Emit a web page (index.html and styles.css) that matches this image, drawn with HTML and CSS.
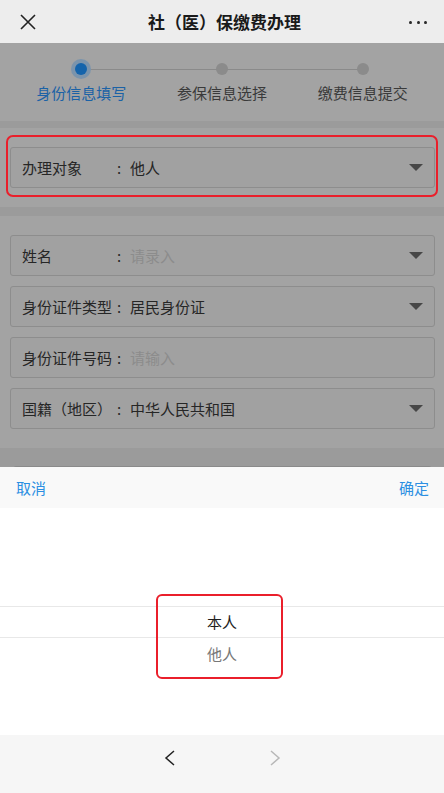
FILE: index.html
```html
<!DOCTYPE html>
<html lang="zh-CN">
<head>
<meta charset="utf-8">
<title>社（医）保缴费办理</title>
<link rel="stylesheet" href="styles.css">
</head>
<body>
<div class="app">
  <header class="nav">
    <svg class="nav-close" width="16" height="16" viewBox="0 0 16 16"><path d="M1 1 L15 15 M15 1 L1 15" stroke="#222" stroke-width="1.6" fill="none"/></svg>
    <h1 class="nav-title">社（医）保缴费办理</h1>
    <div class="nav-more"><i></i><i></i><i></i></div>
  </header>

  <main class="content">
    <div class="steps">
      <div class="step step-active"><span class="step-dot"></span><span class="step-label">身份信息填写</span></div>
      <div class="step"><span class="step-dot"></span><span class="step-label">参保信息选择</span></div>
      <div class="step"><span class="step-dot"></span><span class="step-label">缴费信息提交</span></div>
    </div>

    <div class="divider"></div>

    <section class="card card-target">
      <div class="field">
        <span class="field-label">办理对象</span><span class="field-colon">:</span><span class="field-value">他人</span><span class="field-arrow"></span>
      </div>
      <div class="mark mark-target"></div>
    </section>

    <div class="divider divider-wide"></div>

    <section class="card card-list">
      <div class="field">
        <span class="field-label">姓名</span><span class="field-colon">:</span><span class="field-value placeholder">请录入</span><span class="field-arrow"></span>
      </div>
      <div class="field">
        <span class="field-label">身份证件类型</span><span class="field-colon">:</span><span class="field-value">居民身份证</span><span class="field-arrow"></span>
      </div>
      <div class="field">
        <span class="field-label">身份证件号码</span><span class="field-colon">:</span><span class="field-value placeholder">请输入</span>
      </div>
      <div class="field">
        <span class="field-label">国籍（地区）</span><span class="field-colon">:</span><span class="field-value">中华人民共和国</span><span class="field-arrow"></span>
      </div>
    </section>

    <div class="tail">
      <div class="field field-hidden"></div>
    </div>
  </main>

  <div class="sheet">
    <div class="sheet-bar">
      <span class="sheet-btn">取消</span>
      <span class="sheet-btn">确定</span>
    </div>
    <div class="picker">
      <div class="picker-item picker-selected">本人</div>
      <div class="picker-item">他人</div>
      <div class="mark mark-picker"></div>
    </div>
    <div class="sheet-foot">
      <svg width="12" height="16" viewBox="0 0 12 16"><path d="M10 1 L2 8 L10 15" stroke="#222" stroke-width="1.5" fill="none"/></svg>
      <svg width="12" height="16" viewBox="0 0 12 16"><path d="M2 1 L10 8 L2 15" stroke="#b8b8b8" stroke-width="1.5" fill="none"/></svg>
    </div>
  </div>
</div>
</body>
</html>
```

FILE: styles.css
```css
* { box-sizing: border-box; margin: 0; padding: 0; }
html, body { width: 444px; height: 793px; overflow: hidden; }
body {
  font-family: "Noto Sans CJK SC", "Noto Sans", sans-serif;
  font-size: 15px;
  color: #2a2a2a;
  background: #a3a3a3;
}
.app { width: 444px; height: 793px; position: relative; overflow: hidden; }

/* nav */
.nav {
  height: 43px;
  background: #ededed;
  display: flex;
  align-items: center;
  padding: 0 17px 0 20px;
}
.nav-close { flex: 0 0 16px; }
.nav-title {
  flex: 1;
  text-align: center;
  font-size: 17px;
  font-weight: 700;
  color: #1a1a1a;
  line-height: 43px;
  padding-left: 4px;
}
.nav-more { display: flex; gap: 4.5px; width: 18px; padding-top: 2px; }
.nav-more i { width: 3.5px; height: 3.5px; border-radius: 50%; background: #2a2a2a; display: block; }

/* content (masked) */
.content { background: #a3a3a3; }
.steps {
  height: 78px;
  display: grid;
  grid-template-columns: repeat(3, 1fr);
  padding: 16px 11px 0;
}
.step { position: relative; display: flex; flex-direction: column; align-items: center; }
.step:not(:last-child)::after {
  content: "";
  position: absolute;
  top: 10px;
  left: 50%;
  width: 100%;
  height: 1px;
  background: #8a8a8a;
}
.step-dot {
  width: 20px; height: 20px;
  display: flex; align-items: center; justify-content: center;
  position: relative; z-index: 1;
}
.step-dot::before {
  content: "";
  width: 12px; height: 12px; border-radius: 50%;
  background: #8b8b8b;
}
.step-active .step-dot { background: #7b94ac; border-radius: 50%; }
.step-active .step-dot::before { background: #1564ab; }
.step-label { margin-top: 4px; line-height: 20px; font-size: 15px; color: #3a3a3a; }
.step-active .step-label { color: #1b62a6; }

.divider { height: 7px; background: #9b9b9b; }
.divider-wide { height: 9px; }

.card { position: relative; padding: 19px 9px 19px 10px; display: flex; flex-direction: column; gap: 10px; }

.field {
  height: 41px;
  border: 1px solid #8d8d8d;
  border-radius: 3px;
  background: #a1a1a1;
  display: flex;
  align-items: center;
  padding: 0 11px;
  line-height: 20px;
}
.field-label { width: 90px; flex: 0 0 90px; white-space: nowrap; color: #262626; }
.field-colon { width: 14px; flex: 0 0 14px; text-align: center; color: #262626; }
.field-value { flex: 1; padding-left: 4px; color: #262626; }
.field-value.placeholder { color: #8c8c8c; }
.field-arrow {
  width: 0; height: 0;
  border-left: 7px solid transparent;
  border-right: 7px solid transparent;
  border-top: 7px solid #474747;
}

.tail { background: #9b9b9b; padding: 18px 12px 0 13px; height: 400px; }
.field-hidden { background: #9b9b9b; border-color: #8a8a8a; }

/* annotation marks */
.mark { position: absolute; border: 2px solid #ea1f2b; border-radius: 7px; z-index: 5; pointer-events: none; }
.mark-target { left: 6px; right: 6px; top: 7px; height: 62px; }

/* bottom sheet */
.sheet {
  position: absolute;
  left: 0; right: 0; bottom: 0;
  height: 326px;
  display: flex;
  flex-direction: column;
  background: #fff;
}
.sheet-bar {
  height: 41px;
  background: #f9f9f9;
  display: flex;
  justify-content: space-between;
  align-items: center;
  padding: 0 15px 0 16px;
}
.sheet-btn { color: #2c8fe2; font-size: 15px; line-height: 20px; }
.picker {
  position: relative;
  height: 227px;
  background: #fff;
  padding-top: 98px;
}
.picker-item {
  height: 32px;
  line-height: 32px;
  text-align: center;
  font-size: 15px;
  color: #777;
}
.picker-selected {
  color: #1e1e1e;
  border-top: 1px solid #e8e8e8;
  border-bottom: 1px solid #e8e8e8;
  line-height: 30px;
}
.mark-picker { left: 156px; width: 127px; top: 86px; height: 85px; border-radius: 6px; }
.sheet-foot {
  flex: 1;
  background: #f6f6f6;
  display: flex;
  align-items: flex-start;
  justify-content: center;
  gap: 93px;
  padding-top: 15px;
}
```
